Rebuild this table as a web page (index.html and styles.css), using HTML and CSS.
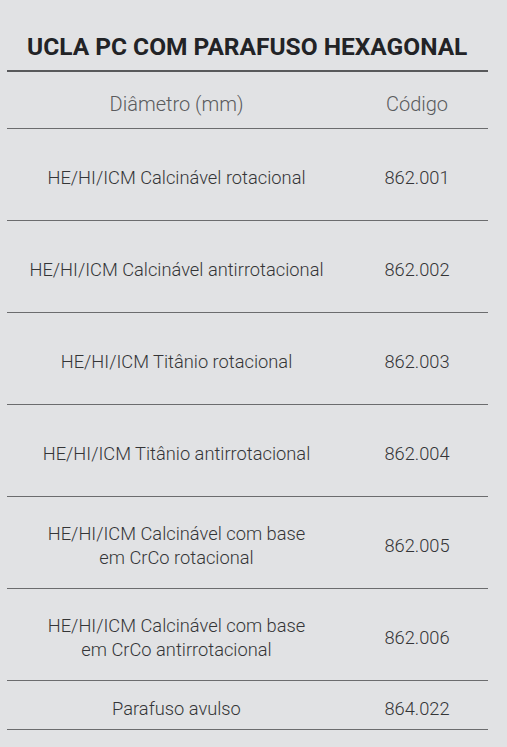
FILE: index.html
```html
<!DOCTYPE html>
<html lang="pt">
<head>
<meta charset="utf-8">
<link rel="stylesheet" href="styles.css">
</head>
<body>
<div class="sheet">
  <h1 class="title">UCLA PC COM PARAFUSO HEXAGONAL</h1>
  <div class="table">
    <div class="row head"><div class="c1">Diâmetro (mm)</div><div class="c2">Código</div></div>
    <div class="row"><div class="c1">HE/HI/ICM Calcinável rotacional</div><div class="c2">862.001</div></div>
    <div class="row"><div class="c1">HE/HI/ICM Calcinável antirrotacional</div><div class="c2">862.002</div></div>
    <div class="row"><div class="c1">HE/HI/ICM Titânio rotacional</div><div class="c2">862.003</div></div>
    <div class="row"><div class="c1">HE/HI/ICM Titânio antirrotacional</div><div class="c2">862.004</div></div>
    <div class="row"><div class="c1">HE/HI/ICM Calcinável com base<br>em CrCo rotacional</div><div class="c2">862.005</div></div>
    <div class="row"><div class="c1">HE/HI/ICM Calcinável com base<br>em CrCo antirrotacional</div><div class="c2">862.006</div></div>
    <div class="row last"><div class="c1">Parafuso avulso</div><div class="c2">864.022</div></div>
  </div>
</div>
</body>
</html>
```
FILE: styles.css
```css
html, body {
  margin: 0;
  padding: 0;
  background: #e1e2e4;
}
body {
  font-family: Roboto, "Liberation Sans", sans-serif;
  color: #343537;
}
.sheet {
  width: 481px;
  margin-left: 7px;
}
.title {
  margin: 0;
  padding: 33px 0 9px 20px;
  font-size: 24.5px;
  line-height: 28px;
  font-weight: 700;
  color: #222326;
  border-bottom: 2px solid #58595b;
}
.table {
  display: flex;
  flex-direction: column;
}
.row {
  display: grid;
  grid-template-columns: 339px 142px;
  height: 92px;
  box-sizing: border-box;
  padding-top: 6px;
  border-bottom: 1px solid #6b6c6e;
  align-items: center;
  font-size: 18.3px;
  font-weight: 300;
  line-height: 24px;
}
.row.head {
  height: 57px;
  padding-top: 7px;
  font-size: 20px;
  color: #5a5b5d;
}
.row.last {
  height: 49px;
  padding-top: 7px;
}
.c1, .c2 {
  text-align: center;
}
```
